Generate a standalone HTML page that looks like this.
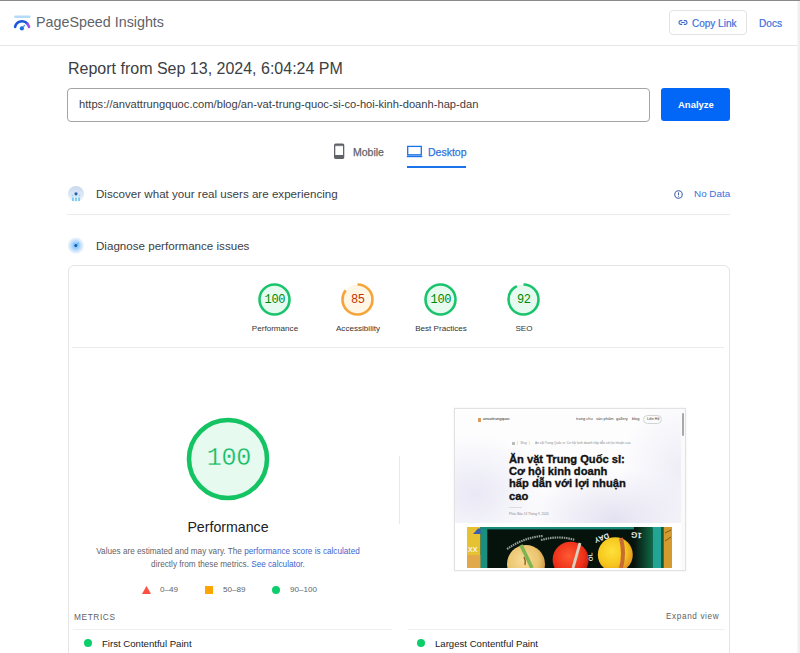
<!DOCTYPE html>
<html><head><meta charset="utf-8">
<style>
*{margin:0;padding:0;box-sizing:border-box}
html,body{width:800px;height:653px;overflow:hidden;background:#fff}
body{position:relative;font-family:"Liberation Sans",sans-serif;color:#202124}
.a{position:absolute;white-space:nowrap}
.topline{left:0;top:0;width:800px;height:1px;background:#8a8a8a}
.sb{left:797px;top:1px;width:3px;height:652px;background:linear-gradient(90deg,#f7f7f7,#ececec)}
.hdr-line{left:0;top:45px;width:797px;height:1px;background:#e6e6e6}
.brand{left:36px;top:14px;font-size:14.3px;color:#5f6368;line-height:16px}
.copy{left:669px;top:10px;width:78px;height:25px;border:1px solid #e3e3e3;border-radius:4px}
.copytxt{left:692px;top:18px;font-size:10px;color:#3c6fdc;line-height:12px;-webkit-text-stroke:0.2px #3c6fdc}
.docs{left:759px;top:18px;font-size:10.1px;color:#3c6fdc;line-height:12px;-webkit-text-stroke:0.2px #3c6fdc}
.title{left:68px;top:60px;font-size:16px;color:#3c4043;line-height:18px}
.input{left:67px;top:88px;width:583px;height:34px;border:1px solid #a4a4a4;border-radius:4px}
.url{left:79px;top:97px;font-size:11.17px;color:#3c4043;line-height:14px}
.btn{left:661px;top:88px;width:69px;height:33px;background:#0266f6;border-radius:3px}
.btntxt{left:678px;top:99px;font-size:9.5px;font-weight:700;color:#fff;line-height:11px}
.tab1{left:353px;top:146px;font-size:10.5px;color:#5f6368;line-height:12px;-webkit-text-stroke:0.25px #5f6368}
.tab2{left:428px;top:146px;font-size:10.5px;color:#2f74dc;line-height:12px;-webkit-text-stroke:0.25px #2f74dc}
.tabline{left:407px;top:166px;width:59px;height:2px;background:#1a73e8}
.sec1{left:96px;top:187px;font-size:11.6px;color:#3c4043;line-height:13px}
.sec2{left:96px;top:239px;font-size:11.6px;color:#3c4043;line-height:13px}
.sep1{left:67px;top:214px;width:663px;height:1px;background:#ebebeb}
.nodata{left:694px;top:188px;font-size:9.9px;color:#3c6fdc;line-height:12px}
.card{left:68px;top:265px;width:662px;height:420px;border:1px solid #e4e4e4;border-radius:6px}
.sep2{left:72px;top:347px;width:652px;height:1px;background:#ebebeb}
.glab{font-size:8.1px;color:#333;line-height:10px;text-align:center;width:80px}
.gnum{font-family:"Liberation Mono",monospace;font-size:12px;letter-spacing:-0.4px;text-indent:-0.4px;line-height:14px;text-align:center;width:40px}
.vdiv{left:399px;top:456px;width:1px;height:68px;background:#e8e8e8}
.bigperf{left:148px;top:519px;width:160px;text-align:center;font-size:14.2px;color:#202124;line-height:16px}
.desc{left:60px;top:544.5px;width:336px;text-align:center;font-size:8.2px;color:#5f6368;line-height:13.5px;white-space:normal}
.desc a{color:#3d66cf;text-decoration:none}
.leg{font-size:8.1px;color:#5f6368;line-height:10px}
.metrics{left:74px;top:612px;font-size:8.3px;letter-spacing:0.6px;color:#5f6368;line-height:10px}
.expand{left:666px;top:611.5px;font-size:8.2px;letter-spacing:0.62px;color:#616161;line-height:10px}
.msep{top:629px;height:1px;background:#f0f0f0}
.mdot{width:8px;height:8px;border-radius:50%;background:#0cce6b}
.mtxt{top:638px;font-size:9.6px;color:#202124;line-height:11px}
</style></head><body>
<div class="a topline"></div>
<div class="a sb"></div>
<div class="a hdr-line"></div>

<!-- logo -->
<svg class="a" style="left:12px;top:12px" width="22" height="22" viewBox="0 0 22 22">
  <rect x="2.2" y="3.4" width="16.3" height="2.6" rx="1.2" fill="#b4dbf9"/>
  <path d="M3.1 14.9 A7.1 7.1 0 0 1 15.5 11.9" fill="none" stroke="#1b55d8" stroke-width="2.6" stroke-linecap="round"/>
  <path d="M15.5 11.9 A7.1 7.1 0 0 1 17.0 14.9" fill="none" stroke="#a24ee8" stroke-width="2.6" stroke-linecap="round"/>
  <path d="M9.9 16.4 L12.9 13" stroke="#4cb0e8" stroke-width="1.3"/>
  <circle cx="9.9" cy="16.4" r="2.1" fill="#1a6ee0"/>
</svg>
<div class="a brand">PageSpeed Insights</div>

<div class="a copy"></div>
<svg class="a" style="left:677.8px;top:18.8px" width="10" height="7" viewBox="0 0 11 8">
  <path d="M4.6 1.9H3A2.1 2.1 0 0 0 3 6.1H4.6M6.4 1.9H8A2.1 2.1 0 0 1 8 6.1H6.4M3.6 4H7.4" fill="none" stroke="#3d67c6" stroke-width="1.25"/>
</svg>
<div class="a copytxt">Copy Link</div>
<div class="a docs">Docs</div>

<div class="a title">Report from Sep 13, 2024, 6:04:24 PM</div>
<div class="a input"></div>
<div class="a url">https://anvattrungquoc.com/blog/an-vat-trung-quoc-si-co-hoi-kinh-doanh-hap-dan</div>
<div class="a btn"></div>
<div class="a btntxt">Analyze</div>

<!-- tabs -->
<svg class="a" style="left:333px;top:143px" width="12" height="16" viewBox="0 0 12 16">
  <rect x="1.65" y="1.25" width="9" height="14" rx="1" fill="none" stroke="#5f6368" stroke-width="1.3"/>
  <rect x="1.65" y="2.2" width="9" height="0.9" fill="#5f6368"/>
  <rect x="1.65" y="12" width="9" height="3.2" fill="#5f6368"/>
</svg>
<div class="a tab1">Mobile</div>
<svg class="a" style="left:406px;top:145px" width="17" height="13" viewBox="0 0 17 13">
  <rect x="1.7" y="1.4" width="13.6" height="8.4" fill="none" stroke="#1a73e8" stroke-width="1.3"/>
  <rect x="0.8" y="10.6" width="15.5" height="1.6" fill="#1a73e8"/>
</svg>
<div class="a tab2">Desktop</div>
<div class="a tabline"></div>

<!-- section 1 -->
<svg class="a" style="left:67px;top:185px" width="18" height="18" viewBox="0 0 18 18">
  <defs><linearGradient id="cg" x1="0" y1="0" x2="0" y2="1"><stop offset="0" stop-color="#c9d8ee"/><stop offset="0.6" stop-color="#dfe9f8"/><stop offset="1" stop-color="#eef5fd"/></linearGradient></defs>
  <circle cx="9" cy="9" r="8" fill="url(#cg)"/>
  <path d="M5 12.5Q9 8.5 13 12.5" fill="none" stroke="#cfe9fb" stroke-width="2"/>
  <circle cx="9" cy="8.8" r="1.6" fill="#2a5fa8"/>
  <circle cx="5.3" cy="10.4" r="0.7" fill="#8cc4ee"/>
  <circle cx="12.7" cy="10.4" r="0.7" fill="#8cc4ee"/>
  <rect x="5.2" y="12.6" width="1.5" height="3.4" fill="#62c3e6"/>
  <rect x="8.25" y="12.6" width="1.5" height="3.4" fill="#62c3e6"/>
  <rect x="11.3" y="12.6" width="1.5" height="3.4" fill="#62c3e6"/>
</svg>
<div class="a sec1">Discover what your real users are experiencing</div>
<svg class="a" style="left:673.8px;top:189.6px" width="9" height="9" viewBox="0 0 9 9">
  <circle cx="4.5" cy="4.5" r="3.75" fill="none" stroke="#4662a8" stroke-width="1.1"/>
  <rect x="4" y="2.4" width="1" height="2.6" fill="#4662a8"/>
  <rect x="4" y="5.7" width="1" height="1" fill="#4662a8"/>
</svg>
<div class="a nodata">No Data</div>
<div class="a sep1"></div>

<!-- section 2 -->
<svg class="a" style="left:67px;top:237px" width="18" height="18" viewBox="0 0 18 18">
  <defs><radialGradient id="dg"><stop offset="0" stop-color="#6fb6f8"/><stop offset="0.45" stop-color="#a9d3fb"/><stop offset="0.75" stop-color="#d7e9fc"/><stop offset="1" stop-color="#f0f6fe"/></radialGradient></defs>
  <circle cx="8.8" cy="8.6" r="8.2" fill="url(#dg)"/>
  <path d="M8.8 8.6L11.8 5.6" stroke="#5ab8fb" stroke-width="1.1"/>
  <circle cx="8.8" cy="8.6" r="1.5" fill="#0f5fb5"/>
</svg>
<div class="a sec2">Diagnose performance issues</div>

<div class="a card"></div>

<!-- gauges -->
<svg class="a" style="left:257px;top:281.5px" width="35" height="35" viewBox="0 0 35 35">
  <circle cx="17.5" cy="17.5" r="15" fill="rgba(12,206,107,0.1)" stroke="#19c46c" stroke-width="2.6"/>
</svg>
<div class="a gnum" style="left:255px;top:293px;color:#008800">100</div>
<div class="a glab" style="left:235px;top:324px">Performance</div>

<svg class="a" style="left:340px;top:281.5px" width="35" height="35" viewBox="0 0 35 35">
  <circle cx="17.5" cy="17.5" r="15" fill="rgba(255,164,0,0.1)"/>
  <circle cx="17.5" cy="17.5" r="15" fill="none" stroke="#f5a43a" stroke-width="2.6" stroke-dasharray="80.1 94.25" transform="rotate(-90 17.5 17.5)"/>
</svg>
<div class="a gnum" style="left:338px;top:293px;color:#c33300">85</div>
<div class="a glab" style="left:318px;top:324px">Accessibility</div>

<svg class="a" style="left:423px;top:281.5px" width="35" height="35" viewBox="0 0 35 35">
  <circle cx="17.5" cy="17.5" r="15" fill="rgba(12,206,107,0.1)" stroke="#19c46c" stroke-width="2.6"/>
</svg>
<div class="a gnum" style="left:421px;top:293px;color:#008800">100</div>
<div class="a glab" style="left:401px;top:324px">Best Practices</div>

<svg class="a" style="left:506px;top:281.5px" width="35" height="35" viewBox="0 0 35 35">
  <circle cx="17.5" cy="17.5" r="15" fill="rgba(12,206,107,0.1)"/>
  <circle cx="17.5" cy="17.5" r="15" fill="none" stroke="#19c46c" stroke-width="2.6" stroke-dasharray="86.7 94.25" transform="rotate(-90 17.5 17.5)"/>
</svg>
<div class="a gnum" style="left:504px;top:293px;color:#008800">92</div>
<div class="a glab" style="left:484px;top:324px">SEO</div>

<div class="a sep2"></div>

<!-- big gauge -->
<svg class="a" style="left:185px;top:416px" width="86" height="86" viewBox="0 0 86 86">
  <circle cx="43" cy="43" r="39" fill="rgba(12,206,107,0.1)" stroke="#14c463" stroke-width="4.6"/>
</svg>
<div class="a gnum" style="left:179px;top:446px;width:100px;font-size:25px;letter-spacing:-0.3px;text-indent:-0.3px;line-height:26px;color:#12bd64;-webkit-text-stroke:0.3px #e7faf0">100</div>
<div class="a bigperf">Performance</div>
<div class="a desc">Values are estimated and may vary. The <a>performance score is calculated</a><br>directly from these metrics. <a>See calculator.</a></div>

<svg class="a" style="left:142px;top:586px" width="9" height="8" viewBox="0 0 9 8"><path d="M4.5 0L9 8H0Z" fill="#ff4e42"/></svg>
<div class="a leg" style="left:160px;top:585px">0–49</div>
<div class="a" style="left:205px;top:586px;width:8px;height:8px;background:#ffa400"></div>
<div class="a leg" style="left:223px;top:585px">50–89</div>
<div class="a" style="left:272px;top:586px;width:8px;height:8px;border-radius:50%;background:#0cce6b"></div>
<div class="a leg" style="left:290px;top:585px">90–100</div>

<div class="a vdiv"></div>

<!-- thumbnail -->
<div class="a" style="left:454px;top:408px;width:232px;height:163px;border:1px solid #e2e2e2;background:#fff;overflow:hidden;box-shadow:0 0 2px rgba(0,0,0,0.08)">
  <div class="a" style="left:0;top:0;width:226px;height:114px;background:radial-gradient(ellipse 70px 60px at 20px 85px,#e9e8f5 0%,rgba(233,232,245,0) 100%),radial-gradient(ellipse 90px 50px at 160px 110px,#e4e2f1 0%,rgba(228,226,241,0) 100%),radial-gradient(ellipse 60px 70px at 226px 60px,#eeedf7 0%,rgba(238,237,247,0) 100%),#fdfdfe"></div>
  <div class="a" style="left:22.5px;top:8.5px;width:3.5px;height:4px;background:#d99a5a;border-radius:0.5px"></div>
  <div class="a" style="left:28px;top:6.5px;font-size:3.9px;line-height:6px;color:#222">anvattrungquoc</div>
  <div class="a" style="left:121px;top:7px;font-size:4px;line-height:6px;color:#444;word-spacing:0">trang chủ</div>
  <div class="a" style="left:141px;top:7px;font-size:4px;line-height:6px;color:#444">sản phẩm</div>
  <div class="a" style="left:161px;top:7px;font-size:4px;line-height:6px;color:#444">gallery</div>
  <div class="a" style="left:177px;top:7px;font-size:4px;line-height:6px;color:#444">blog</div>
  <div class="a" style="left:188px;top:6px;width:19px;height:9px;border:0.8px solid #cfd6d4;border-radius:5px"></div>
  <div class="a" style="left:192px;top:7px;font-size:3.6px;line-height:6px;color:#333">Liên Hệ</div>
  <div class="a" style="left:226px;top:0;width:5px;height:161px;background:#fafafa"></div>
  <div class="a" style="left:227px;top:4px;width:2px;height:23px;background:#a8a8a8;border-radius:1px"></div>
  <div class="a" style="left:57px;top:33px;width:3px;height:3px;background:#bbb"></div>
  <div class="a" style="left:62px;top:32px;font-size:3.2px;line-height:5px;color:#999">|&nbsp;&nbsp;&nbsp;Blog&nbsp;&nbsp;|&nbsp;&nbsp;</div>
  <div class="a" style="left:80px;top:32px;font-size:3.2px;line-height:5px;color:#8a8a8a">Ăn vặt Trung Quốc sỉ: Cơ hội kinh doanh hấp dẫn với lợi nhuận cao</div>
  <div class="a" style="left:54px;top:44px;font-size:11.15px;font-weight:700;line-height:12.2px;color:#111;white-space:pre;-webkit-text-stroke:0.35px #111">Ăn vặt Trung Quốc sỉ:
Cơ hội kinh doanh
hấp dẫn với lợi nhuận
cao</div>
  <div class="a" style="left:54px;top:97.5px;width:13px;height:0.6px;background:#ddd"></div>
  <div class="a" style="left:54px;top:103px;font-size:3.2px;line-height:5px;color:#888">Phúc Bảo  13 Tháng 9, 2024</div>
  <svg class="a" style="left:12px;top:118px" width="205" height="41" viewBox="0 0 205 41">
    <defs>
      <radialGradient id="fr1" cx="0.42" cy="0.4" r="0.6"><stop offset="0" stop-color="#f6dc98"/><stop offset="0.7" stop-color="#ebc46e"/><stop offset="1" stop-color="#cf9a48"/></radialGradient>
      <radialGradient id="fr2" cx="0.45" cy="0.4" r="0.6"><stop offset="0" stop-color="#ff5a34"/><stop offset="0.7" stop-color="#ee3018"/><stop offset="1" stop-color="#c21e10"/></radialGradient>
      <radialGradient id="fr3" cx="0.4" cy="0.4" r="0.6"><stop offset="0" stop-color="#ffe03a"/><stop offset="0.7" stop-color="#f5c51c"/><stop offset="1" stop-color="#e39a24"/></radialGradient>
      <linearGradient id="gr" x1="0" x2="1"><stop offset="0" stop-color="#07130d"/><stop offset="1" stop-color="#0f6b47"/></linearGradient>
      <linearGradient id="tb" x1="0" x2="1"><stop offset="0" stop-color="#1f9a8a"/><stop offset="0.7" stop-color="#157a66"/><stop offset="1" stop-color="#07130d"/></linearGradient>
    </defs>
    <rect width="205" height="41" fill="#06120c"/>
    <rect x="0" y="0" width="13.6" height="41" fill="#e6c232"/>
    <path d="M6 7L11 1.5H14V7Z" fill="#3a5db0"/>
    <rect x="0" y="28" width="13.6" height="13" fill="#e2a94a"/>
    <text x="1" y="25" font-family="Liberation Sans" font-weight="700" font-size="7" fill="#f4f2f0">XX</text>
    <rect x="13.6" y="0" width="6.7" height="41" fill="#1b8f7f"/>
    <rect x="13.6" y="0" width="180" height="2.4" fill="#1a8a78"/>
    <rect x="167" y="0" width="18.8" height="41" fill="url(#gr)"/>
    <rect x="185.8" y="0" width="8.2" height="41" fill="#22a595"/>
    <rect x="194" y="0" width="2.6" height="41" fill="#0e5a3a"/>
    <rect x="196.6" y="0" width="8.4" height="41" fill="#d49a2e"/>
    <path d="M198 6L204 3M198 14L204 10" stroke="#7a5a20" stroke-width="1"/>
    <g fill="none" stroke="#aab6ae" stroke-width="2.2" stroke-dasharray="1.5 0.8" opacity="0.85">
      <path d="M40 22Q58 10 76 9"/>
      <path d="M74 13Q92 8 108 13"/>
    </g>
    <circle cx="59" cy="37" r="19" fill="url(#fr1)"/>
    <path d="M54 18L65 41" stroke="#7eb552" stroke-width="3.6"/>
    <path d="M57 30Q59 34 58 38" stroke="#9a5a2a" stroke-width="1.4" fill="none"/>
    <circle cx="103.6" cy="32.7" r="18" fill="url(#fr2)"/>
    <path d="M113 16L106 41" stroke="#d8d2c0" stroke-width="2.8"/>
    <circle cx="148.3" cy="27.7" r="17.5" fill="url(#fr3)"/>
    <path d="M154 11Q158 27 154 41" stroke="#c76a34" stroke-width="4" fill="none"/>
    <text transform="translate(141 6) rotate(160)" font-family="Liberation Sans" font-weight="700" font-size="7.5" fill="#e9eee9">DAY</text>
    <text transform="translate(175 6) rotate(185)" font-family="Liberation Sans" font-weight="700" font-size="8" fill="#e9eee9">1G</text>
    <text transform="translate(126 34) rotate(-95)" font-family="Liberation Sans" font-weight="700" font-size="6" fill="#dfe6df">OL</text>
  </svg>
</div>

<div class="a metrics">METRICS</div>
<div class="a expand">Expand view</div>
<div class="a msep" style="left:73px;width:319px"></div>
<div class="a msep" style="left:408px;width:317px"></div>
<div class="a mdot" style="left:84px;top:639px"></div>
<div class="a mtxt" style="left:102px">First Contentful Paint</div>
<div class="a mdot" style="left:417px;top:639px"></div>
<div class="a mtxt" style="left:435px">Largest Contentful Paint</div>
</body></html>
